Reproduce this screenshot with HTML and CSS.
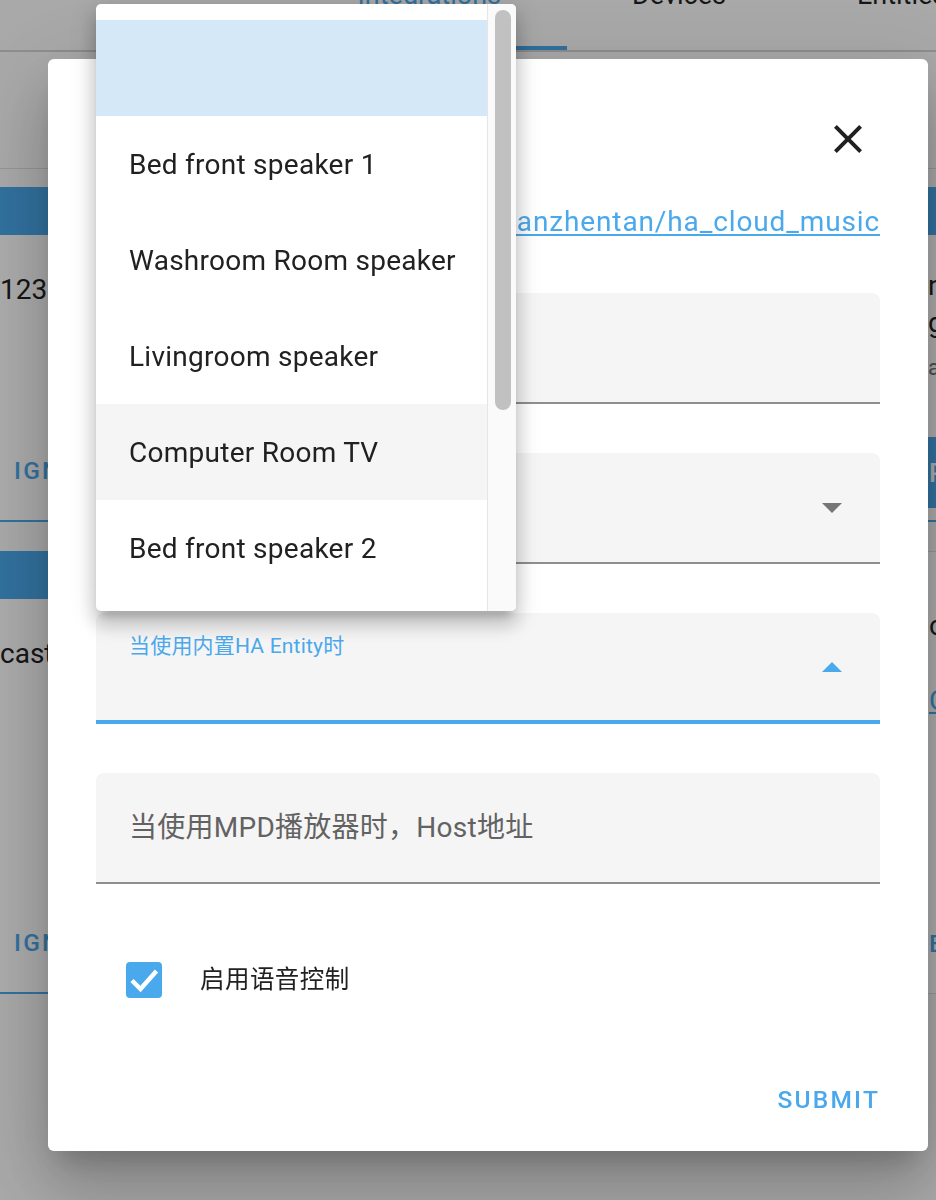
FILE: index.html
```html
<!DOCTYPE html>
<html lang="zh">
<head>
<meta charset="utf-8">
<title>ha_cloud_music</title>
<link rel="stylesheet" href="styles.css">
</head>
<body>
<div class="page">
  <header class="app-header">
    <nav class="tabs">
      <div class="tab tab-active"><span class="tab-label">Integrations</span></div>
      <div class="tab"><span class="tab-label">Devices</span></div>
      <div class="tab"><span class="tab-label">Entities</span></div>
    </nav>
  </header>
  <div class="toolbar"></div>
  <main class="cards">
    <section class="card card-discovered">
      <div class="card-head"></div>
      <div class="card-body">
        <div class="card-title card-title-left">123</div>
      </div>
      <div class="card-actions"><span class="card-btn">IGNORE</span></div>
    </section>
    <section class="card card-discovered">
      <div class="card-head"></div>
      <div class="card-body">
        <div class="card-title card-title-left">Sonos</div>
      </div>
      <div class="card-actions"><span class="card-btn">IGNORE</span></div>
    </section>
    <section class="card card-discovered">
      <div class="card-head"></div>
      <div class="card-body">
        <div class="card-title card-title-right">nas media</div>
        <div class="card-title">gateway</div>
        <div class="card-sub">appdaemon</div>
        <div class="card-fill"><span class="card-fill-text">RECONFIGURE</span></div>
      </div>
    </section>
    <section class="card card-discovered">
      <div class="card-head"></div>
      <div class="card-body">
        <div class="card-title card-title-left">cast</div>
      </div>
      <div class="card-actions"><span class="card-btn">IGNORE</span></div>
    </section>
    <section class="card card-plain">
      <div class="card-body">
        <div class="card-title card-title-left">Mobile App</div>
      </div>
      <div class="card-actions"><span class="card-btn">OPTIONS</span></div>
    </section>
    <section class="card card-plain">
      <div class="card-body">
        <div class="card-title card-title-plain">cloud music</div>
        <a class="card-link" href="#">Configure</a>
      </div>
      <div class="card-actions"><span class="card-btn">EDIT</span></div>
    </section>
  </main>
</div>

<div class="scrim"></div>

<div class="dialog" role="dialog">
  <div class="dialog-header">
    <button class="icon-btn" aria-label="close">
      <svg viewBox="0 0 24 24" width="48" height="48"><path d="M19,6.41L17.59,5L12,10.59L6.41,5L5,6.41L10.59,12L5,17.59L6.41,19L12,13.41L17.59,19L19,17.59L13.41,12L19,6.41Z"/></svg>
    </button>
  </div>
  <p class="dialog-desc"><a href="#">https://github.com/shaonianzhentan/ha_cloud_music</a></p>
  <div class="fields">
    <div class="field"></div>
    <div class="field">
      <span class="field-spacer"></span>
      <svg class="arrow" viewBox="0 0 20 10" width="20" height="10"><polygon points="0,0 20,0 10,10"/></svg>
    </div>
    <div class="field field-focused">
      <span class="field-label field-label-float">当使用内置HA Entity时</span>
      <svg class="arrow arrow-up" viewBox="0 0 20 10" width="20" height="10"><polygon points="0,10 20,10 10,0"/></svg>
    </div>
    <div class="field"><span class="field-label">当使用MPD播放器时，Host地址</span></div>
  </div>
  <label class="check-row">
    <span class="checkbox"><svg viewBox="0 0 36 36" width="36" height="36"><polyline points="6,18.5 14.5,27 30.5,9"/></svg></span>
    <span class="check-label">启用语音控制</span>
  </label>
  <div class="dialog-actions"><button class="text-btn">SUBMIT</button></div>
</div>

<div class="menu">
  <div class="menu-list">
    <div class="menu-item menu-item-selected"></div>
    <div class="menu-item">Bed front speaker 1</div>
    <div class="menu-item">Washroom Room speaker</div>
    <div class="menu-item">Livingroom speaker</div>
    <div class="menu-item menu-item-hover">Computer Room TV</div>
    <div class="menu-item">Bed front speaker 2</div>
  </div>
  <div class="menu-scroll"><div class="menu-thumb"></div></div>
</div>
</body>
</html>
```

FILE: styles.css
```css
* { box-sizing: border-box; }

html, body {
  margin: 0;
  padding: 0;
}

body {
  width: 936px;
  height: 1200px;
  overflow: hidden;
  background: #fafafa;
  font-family: Roboto, "Noto Sans CJK SC", sans-serif;
  color: #212121;
}

/* ---------- background page ---------- */
.page {
  width: 936px;
  height: 1200px;
  overflow: hidden;
}

.app-header {
  height: 52px;
  border-bottom: 2px solid #d2d2d2;
  background: #fafafa;
}

.tabs {
  display: flex;
  margin-left: 292px;
  height: 50px;
}

.tab {
  flex: none;
  height: 50px;
  padding: 0 65.5px;
  font-size: 27px;
  color: #222;
  white-space: nowrap;
}

.tab-active {
  color: #4aa8ec;
  border-bottom: 4px solid #4aa8ec;
}

.tab-label {
  display: block;
  line-height: 1;
  margin-top: -18px;
}

.toolbar {
  height: 117px;
  border-bottom: 1px solid #dedede;
}

.cards {
  display: grid;
  grid-template-columns: repeat(3, 448px);
  grid-template-rows: 335px 443px;
  column-gap: 16px;
  row-gap: 29px;
  width: 1376px;
  margin-left: -16px;
  padding-top: 18px;
}

.card {
  background: #fff;
  display: flex;
  flex-direction: column;
  border-radius: 4px;
  overflow: hidden;
}

.card-discovered {
  border-bottom: 2px solid #4aa8ec;
}

.card-plain {
  border: 1px solid #e0e0e0;
}

.card-head {
  flex: none;
  height: 48px;
  background: #4aa8ec;
}

.card-body {
  padding: 0 16px;
}

.card-title {
  font-size: 28px;
  line-height: 37px;
  white-space: nowrap;
  color: #212121;
}

.card-title-left { margin-top: 35.5px; }
.card-title-right { margin-top: 31.5px; }
.card-title-plain { margin-top: 54.5px; }

.card-sub {
  margin-top: 12.5px;
  font-size: 22px;
  line-height: 30px;
  color: #727272;
  white-space: nowrap;
}

.card-fill {
  margin: 54px 0 0 -8px;
  height: 71px;
  background: #4aa8ec;
  display: flex;
  align-items: center;
  padding-left: 9px;
}

.card-fill-text {
  font-size: 26px;
  font-weight: 500;
  color: #fff;
  letter-spacing: 2px;
  white-space: nowrap;
}

.card-link {
  display: block;
  margin-top: 38px;
  font-size: 28px;
  line-height: 37px;
  color: #4aa8ec;
  text-decoration: underline;
}

.card-actions {
  margin-top: auto;
  padding: 0 0 31px 30px;
}

.card-btn {
  display: block;
  font-size: 24.5px;
  font-weight: 500;
  letter-spacing: 2.19px;
  line-height: 36px;
  color: #4aa8ec;
  white-space: nowrap;
}

.card-plain .card-actions { padding-left: 16px; }

/* ---------- scrim ---------- */
.scrim {
  position: fixed;
  inset: 0;
  background: rgba(0, 0, 0, 0.32);
}

/* ---------- dialog ---------- */
.dialog {
  position: fixed;
  left: 48px;
  top: 59px;
  width: 880px;
  height: 1092px;
  padding: 0 48px;
  background: #fff;
  border-radius: 6px;
  display: flex;
  flex-direction: column;
  box-shadow:
    0 19px 26px -12px rgba(0, 0, 0, 0.2),
    0 42px 66px 5px rgba(0, 0, 0, 0.14),
    0 16px 80px 14px rgba(0, 0, 0, 0.12);
}

.dialog-header {
  display: flex;
  justify-content: flex-end;
  align-items: center;
  height: 112px;
  padding-top: 48px;
}

.icon-btn {
  width: 64px;
  height: 64px;
  padding: 0;
  border: none;
  background: none;
  display: flex;
  align-items: center;
  justify-content: center;
}

.icon-btn svg { fill: #212121; }

.dialog-desc {
  margin: 31px 0 0;
  font-size: 28px;
  line-height: 40px;
  letter-spacing: 0.875px;
  text-align: right;
  white-space: nowrap;
}

.dialog-desc a {
  color: #4aa8ec;
  text-decoration: underline;
  text-decoration-thickness: 2px;
  text-underline-offset: 3px;
}

.fields {
  display: flex;
  flex-direction: column;
  gap: 49px;
  margin-top: 51px;
}

.field {
  height: 111px;
  background: #f5f5f5;
  border-radius: 8px 8px 0 0;
  border-bottom: 2px solid #8e8e8e;
  display: flex;
  align-items: center;
  padding: 0 38px 0 33px;
}

.field-focused {
  border-bottom: 4px solid #4aa8ec;
}

.field-spacer { flex: 1; }

.field-label {
  flex: 1;
  font-size: 28px;
  line-height: 36px;
  letter-spacing: 0.26px;
  color: #626262;
  white-space: nowrap;
}

.field-label-float {
  align-self: flex-start;
  margin-top: 21px;
  font-size: 21px;
  line-height: 24px;
  letter-spacing: 0.2px;
  color: #4aa8ec;
}

.arrow { flex: none; fill: #757575; }
.arrow-up { fill: #4aa8ec; }

.check-row {
  display: flex;
  align-items: center;
  gap: 38px;
  height: 36px;
  margin-top: 78px;
  padding-left: 30px;
}

.checkbox {
  width: 36px;
  height: 36px;
  border-radius: 4px;
  background: #4aa8ec;
  display: flex;
}

.checkbox svg {
  fill: none;
  stroke: #fff;
  stroke-width: 4.5px;
}

.check-label {
  font-size: 24.5px;
  line-height: 36px;
  letter-spacing: 0.44px;
  color: #212121;
}

.dialog-actions {
  display: flex;
  justify-content: flex-end;
  margin-top: 84px;
}

.text-btn {
  padding: 0;
  border: none;
  background: none;
  font-family: inherit;
  font-size: 24.5px;
  font-weight: 500;
  letter-spacing: 2.19px;
  line-height: 36px;
  color: #4aa8ec;
}

/* ---------- dropdown menu ---------- */
.menu {
  position: fixed;
  left: 96px;
  top: 4px;
  width: 420px;
  height: 607px;
  background: #fff;
  border-radius: 5px;
  overflow: hidden;
  display: flex;
  box-shadow:
    0 9px 9px -5px rgba(0, 0, 0, 0.2),
    0 14px 18px 2px rgba(0, 0, 0, 0.14),
    0 5px 25px 4px rgba(0, 0, 0, 0.12);
}

.menu-list {
  flex: 1;
  padding-top: 16px;
  overflow: hidden;
}

.menu-item {
  height: 96px;
  padding-left: 33px;
  display: flex;
  align-items: center;
  font-size: 28px;
  letter-spacing: 0.26px;
  color: #212121;
  white-space: nowrap;
}

.menu-item-selected { background: #d4e8f8; }
.menu-item-hover { background: #f5f5f5; }

.menu-scroll {
  flex: none;
  width: 29px;
  background: #fafafa;
  border-left: 1px solid #e6e6e6;
  padding: 6px 0 0 7px;
}

.menu-thumb {
  width: 16px;
  height: 400px;
  border-radius: 8px;
  background: #c1c1c1;
}
```
